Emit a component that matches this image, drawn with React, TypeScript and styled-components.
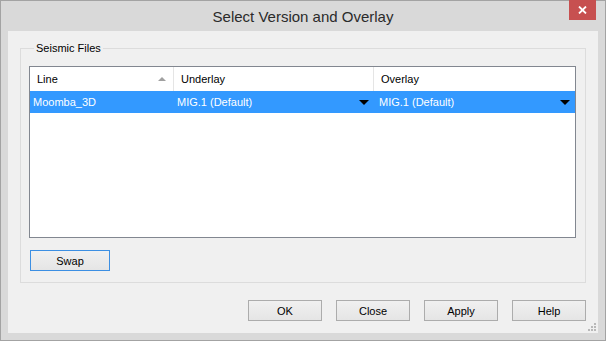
import styled, { createGlobalStyle } from 'styled-components'

const GlobalStyle = createGlobalStyle`
    html, body {
        margin: 0;
        padding: 0;
        background: #ffffff;
    }
    * {
        box-sizing: border-box;
    }
`

const Window = styled.div`
    width: 606px;
    height: 341px;
    display: flex;
    flex-direction: column;
    background: #d9d9d9;
    border: 1px solid #a3a3a3;
    padding: 0 7px 7px 7px;
    font-family: "Liberation Sans", Arial, sans-serif;
`

const TitleBar = styled.div`
    height: 30px;
    display: flex;
    align-items: center;
    justify-content: center;
    position: relative;
    color: #2b2b2b;
    font-size: 15px;
`

const CloseX = styled.div`
    position: absolute;
    top: -1px;
    right: 2px;
    width: 27px;
    height: 20px;
    background: #c75050;
    display: flex;
    align-items: center;
    justify-content: center;
`

const Client = styled.div`
    flex: 1;
    position: relative;
    display: flex;
    flex-direction: column;
    background: #f0f0f0;
    padding: 11px 12px 11px 12px;
    font-size: 11px;
    color: #000;
`

const Group = styled.fieldset`
    margin: 0;
    border: 1px solid #dcdcdc;
    padding: 11px 9px 10px 8px;
    height: 241px;
    display: flex;
    flex-direction: column;
    min-width: 0;
`

const GroupLabel = styled.legend`
    padding: 0 2px;
    margin-left: 5px;
    font-size: 11px;
    line-height: 13px;
`

const List = styled.div`
    height: 172px;
    background: #ffffff;
    border: 1px solid #828790;
    display: flex;
    flex-direction: column;
`

const Row = styled.div<{ $header?: boolean; $selected?: boolean }>`
    display: grid;
    grid-template-columns: 144px 200px 1fr;
    height: ${p => (p.$header ? '24px' : '22px')};
    background: ${p => (p.$selected ? '#3399ff' : '#ffffff')};
    color: ${p => (p.$selected ? '#ffffff' : '#000000')};
`

const HeadCell = styled.div<{ $last?: boolean }>`
    display: flex;
    align-items: center;
    justify-content: space-between;
    padding: 0 7px 0 7px;
    border-right: ${p => (p.$last ? 'none' : '1px solid #e5e5e5')};
`

const Cell = styled.div<{ $pad?: number }>`
    display: flex;
    align-items: center;
    justify-content: space-between;
    padding: 0 5px 0 ${p => p.$pad ?? 3}px;
`

const SortUp = styled.span`
    width: 0;
    height: 0;
    border-left: 4px solid transparent;
    border-right: 4px solid transparent;
    border-bottom: 4px solid #a0a0a0;
`

const DropArrow = styled.span`
    width: 0;
    height: 0;
    border-left: 5px solid transparent;
    border-right: 5px solid transparent;
    border-top: 5px solid #000000;
`

const Button = styled.button<{ $focused?: boolean; $w?: number }>`
    width: ${p => p.$w ?? 74}px;
    height: 21px;
    padding: 0;
    font-family: "Liberation Sans", Arial, sans-serif;
    font-size: 11px;
    color: #000;
    border: 1px solid ${p => (p.$focused ? '#3c8fe3' : '#acacac')};
    background: linear-gradient(#f0f0f0, #e5e5e5);
    border-radius: 0;
`

const SwapRow = styled.div`
    margin-top: 12px;
    padding-left: 1px;
`

const ButtonRow = styled.div`
    display: flex;
    justify-content: flex-end;
    gap: 14px;
    margin-top: 17px;
`

const Grip = styled.svg`
    position: absolute;
    right: 2px;
    bottom: 2px;
`

export default function App() {
    return (
        <>
            <GlobalStyle />
            <Window>
                <TitleBar>
                    Select Version and Overlay
                    <CloseX>
                        <svg width="9" height="8" viewBox="0 0 9 8">
                            <path d="M1 0.5 L8 7.5 M8 0.5 L1 7.5" stroke="#ffffff" strokeWidth="1.8" />
                        </svg>
                    </CloseX>
                </TitleBar>
                <Client>
                    <Group>
                        <GroupLabel>Seismic Files</GroupLabel>
                        <List>
                            <Row $header>
                                <HeadCell>
                                    Line
                                    <SortUp />
                                </HeadCell>
                                <HeadCell>Underlay</HeadCell>
                                <HeadCell $last>Overlay</HeadCell>
                            </Row>
                            <Row $selected>
                                <Cell>Moomba_3D</Cell>
                                <Cell>
                                    MIG.1 (Default)
                                    <DropArrow />
                                </Cell>
                                <Cell $pad={5}>
                                    MIG.1 (Default)
                                    <DropArrow />
                                </Cell>
                            </Row>
                        </List>
                        <SwapRow>
                            <Button $focused $w={80}>Swap</Button>
                        </SwapRow>
                    </Group>
                    <ButtonRow>
                        <Button>OK</Button>
                        <Button>Close</Button>
                        <Button>Apply</Button>
                        <Button>Help</Button>
                    </ButtonRow>
                    <Grip width="9" height="9" viewBox="0 0 9 9">
                        <rect x="7" y="1" width="2" height="2" fill="#b8b8b8" />
                        <rect x="4" y="4" width="2" height="2" fill="#b8b8b8" />
                        <rect x="7" y="4" width="2" height="2" fill="#b8b8b8" />
                        <rect x="1" y="7" width="2" height="2" fill="#b8b8b8" />
                        <rect x="4" y="7" width="2" height="2" fill="#b8b8b8" />
                        <rect x="7" y="7" width="2" height="2" fill="#b8b8b8" />
                    </Grip>
                </Client>
            </Window>
        </>
    )
}
